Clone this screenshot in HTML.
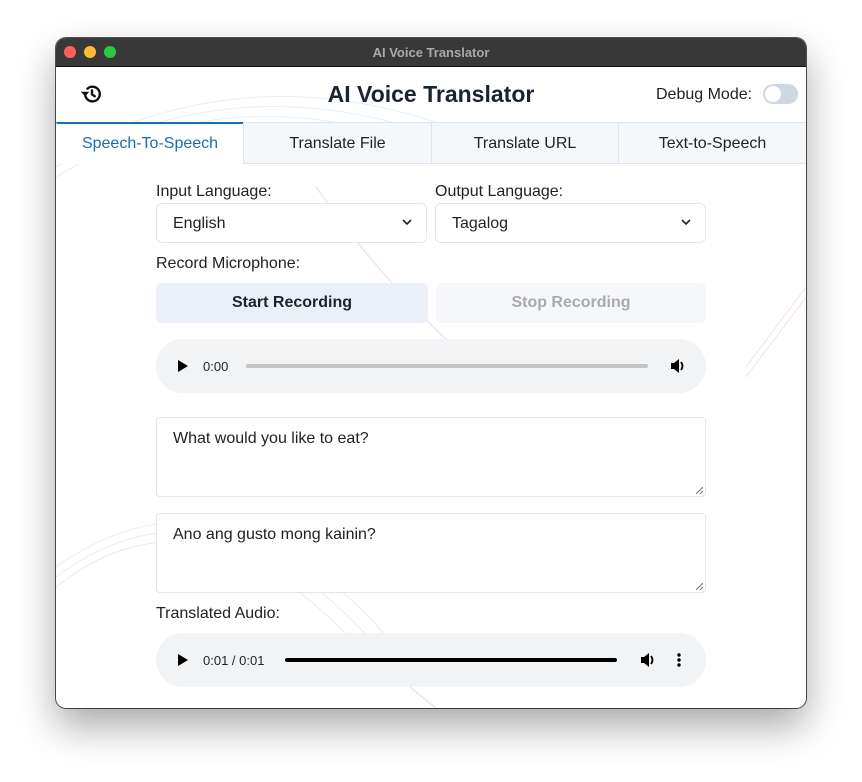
<!DOCTYPE html>
<html><head><meta charset="utf-8"><style>
*{box-sizing:border-box;margin:0;padding:0}
body{width:862px;height:782px;background:#fff;font-family:"Liberation Sans",sans-serif;position:relative;overflow:hidden;color:#1f2328}
.win{position:absolute;left:56px;top:38px;width:750px;height:670px;border-radius:10px;overflow:hidden;background:#fff;box-shadow:0 18px 40px rgba(0,0,0,.35),0 0 0 1px #555}
.tb{position:absolute;left:0;top:0;width:750px;height:29px;background:#383838;border-bottom:1px solid #111}
.tb .t{position:absolute;width:100%;text-align:center;top:7px;font-size:13px;font-weight:bold;color:#a9a9a9}
.dot{position:absolute;top:8px;width:12px;height:12px;border-radius:50%}
.a{position:absolute}
.tab{position:absolute;top:84px;height:42px;background:#f5f8fb;border:1px solid #dfe5ec;font-size:16px;color:#222;text-align:center;line-height:42px}
.lbl{position:absolute;font-size:16px;color:#222}
.sel{position:absolute;top:165px;width:271px;height:40px;border:1px solid #e3e6ec;border-radius:6px;font-size:16px;padding:11px 16px;color:#222;background:#fff}
.btn{position:absolute;top:245px;width:272px;height:40px;border-radius:6px;font-size:16px;font-weight:bold;text-align:center;line-height:40px}
.aud{position:absolute;left:100px;width:550px;height:54px;border-radius:27px;background:#f1f3f4}
.ta{position:absolute;left:100px;width:550px;height:80px;border:1px solid #e3e6ec;border-radius:4px;font-size:16px;padding:12px 16px;color:#222;background:#fff}
.rs{position:absolute;right:2px;bottom:2px}
</style></head><body>
<div class="win">
<svg class="a" style="left:0;top:29px" width="750" height="641">
<g fill="none" stroke="#e4eef6" stroke-width="1">
<path d="M0 110 Q180 0 400 90"/><path d="M0 100 Q190 -10 410 80"/><path d="M0 90 Q200 -20 420 70"/>
<path d="M0 520 Q150 400 320 600"/><path d="M0 510 Q160 390 330 590"/><path d="M0 500 Q170 380 340 580"/>
</g>
<path d="M260 120 Q330 220 420 300" stroke="#efd6ec" fill="none"/>
<path d="M300 570 Q340 610 380 641" stroke="#e2d6f0" fill="none"/>
<g stroke="#f0e0ee" fill="none"><path d="M750 220 Q720 260 690 300"/><path d="M750 230 Q720 270 690 310"/></g>
</svg>
<div class="tb"><div class="dot" style="left:8px;background:#fe5f57"></div><div class="dot" style="left:28px;background:#febc2e"></div><div class="dot" style="left:48px;background:#28c840"></div><div class="t">AI Voice Translator</div></div>
<svg class="a" style="left:25px;top:45px" width="22" height="22" viewBox="0 0 24 24" fill="none" stroke="#111" stroke-width="2.6" stroke-linecap="round"><path d="M4.5 12a8 8 0 1 0 2.5-5.8"/><path d="M1 10l3.5 4 3.5-4z" fill="#111" stroke-width="1"/><path d="M12 8v4.5l3 2"/></svg>
<div class="a" style="left:0;width:750px;top:43px;text-align:center;font-size:23px;font-weight:bold;color:#1c2330">AI Voice Translator</div>
<div class="a" style="left:600px;top:48px;font-size:16px;color:#222">Debug Mode:</div>
<div class="a" style="left:707px;top:46px;width:35px;height:20px;border-radius:10px;background:#cfd8e2"><div style="position:absolute;left:2px;top:2px;width:16px;height:16px;border-radius:50%;background:#fff"></div></div>
<div class="tab" style="left:0;width:188px;background:#fff;border-color:#fff;border-top:2px solid #1a6fb0;color:#1a6fb0;border-bottom:none;line-height:40px">Speech-To-Speech</div>
<div class="tab" style="left:187px;width:189px">Translate File</div>
<div class="tab" style="left:375px;width:188px">Translate URL</div>
<div class="tab" style="left:562px;width:189px">Text-to-Speech</div>
<div class="lbl" style="left:100px;top:145px">Input Language:</div>
<div class="lbl" style="left:379px;top:145px">Output Language:</div>
<div class="sel" style="left:100px">English<svg style="position:absolute;right:14px;top:15px" width="10" height="7"><path d="M1 1l4 4 4-4" stroke="#222" stroke-width="1.6" fill="none"/></svg></div>
<div class="sel" style="left:379px">Tagalog<svg style="position:absolute;right:14px;top:15px" width="10" height="7"><path d="M1 1l4 4 4-4" stroke="#222" stroke-width="1.6" fill="none"/></svg></div>
<div class="lbl" style="left:100px;top:217px">Record Microphone:</div>
<div class="btn" style="left:100px;background:#ebeff7;color:#1c2330">Start Recording</div>
<div class="btn" style="left:380px;width:270px;background:#f5f7fb;color:#aaa">Stop Recording</div>
<div class="aud" style="top:301px">
<svg class="a" style="left:21px;top:21px" width="12" height="12"><path d="M1 0v12l10-6z" fill="#000"/></svg>
<div class="a" style="left:47px;top:20px;font-size:13px">0:00</div>
<div class="a" style="left:90px;top:25px;width:402px;height:4px;border-radius:2px;background:#c4c4c4"></div>
<svg class="a" style="left:514px;top:19px" width="17" height="16"><path d="M1 5h3l5-4v14l-5-4H1z" fill="#000"/><path d="M11 4q3 4 0 8" stroke="#000" stroke-width="1.8" fill="none"/></svg>
</div>
<div class="ta" style="top:379px">What would you like to eat?<svg class="rs" width="7" height="7"><path d="M0 7L7 0M4 7L7 4" stroke="#777"/></svg></div>
<div class="ta" style="top:475px">Ano ang gusto mong kainin?<svg class="rs" width="7" height="7"><path d="M0 7L7 0M4 7L7 4" stroke="#777"/></svg></div>
<div class="lbl" style="left:100px;top:567px">Translated Audio:</div>
<div class="aud" style="top:595px">
<svg class="a" style="left:21px;top:21px" width="12" height="12"><path d="M1 0v12l10-6z" fill="#000"/></svg>
<div class="a" style="left:47px;top:20px;font-size:13px">0:01 / 0:01</div>
<div class="a" style="left:129px;top:25px;width:332px;height:4px;border-radius:2px;background:#000"></div>
<svg class="a" style="left:484px;top:19px" width="17" height="16"><path d="M1 5h3l5-4v14l-5-4H1z" fill="#000"/><path d="M11 4q3 4 0 8" stroke="#000" stroke-width="1.8" fill="none"/></svg>
<svg class="a" style="left:521px;top:19px" width="4" height="16"><circle cx="2" cy="3" r="1.7"/><circle cx="2" cy="8" r="1.7"/><circle cx="2" cy="13" r="1.7"/></svg>
</div>
</div>
</body></html>
